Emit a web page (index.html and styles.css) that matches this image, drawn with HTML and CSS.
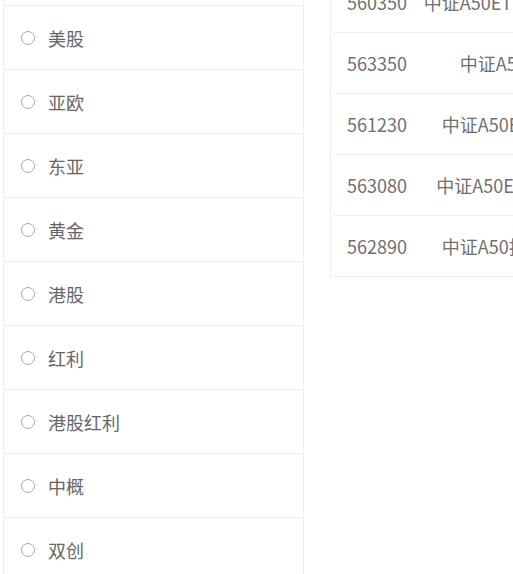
FILE: index.html
```html
<!DOCTYPE html>
<html lang="zh-CN">
<head>
  <meta charset="UTF-8" />
  <meta name="viewport" content="width=device-width, initial-scale=1.0" />
  <title>ETF 分类</title>
  <link rel="stylesheet" href="styles.css">
</head>
<body>
  <main class="layout">
    <ul class="category-list">
      <li class="category-item"><span class="radio"></span>全部</li>
      <li class="category-item"><span class="radio"></span>美股</li>
      <li class="category-item"><span class="radio"></span>亚欧</li>
      <li class="category-item"><span class="radio"></span>东亚</li>
      <li class="category-item"><span class="radio"></span>黄金</li>
      <li class="category-item"><span class="radio"></span>港股</li>
      <li class="category-item"><span class="radio"></span>红利</li>
      <li class="category-item"><span class="radio"></span>港股红利</li>
      <li class="category-item"><span class="radio"></span>中概</li>
      <li class="category-item"><span class="radio"></span>双创</li>
      <li class="category-item"><span class="radio"></span>科创</li>
    </ul>

    <section class="fund-panel">
      <table class="fund-table">
        <thead>
          <tr>
            <th class="col-code">代码</th>
            <th class="col-name">名称</th>
          </tr>
        </thead>
        <tbody>
          <tr>
            <td class="col-code">560350</td>
            <td class="col-name">中证A50ETF指数基金</td>
          </tr>
          <tr>
            <td class="col-code">563350</td>
            <td class="col-name">中证A50ETF</td>
          </tr>
          <tr>
            <td class="col-code">561230</td>
            <td class="col-name">中证A50ETF基金</td>
          </tr>
          <tr>
            <td class="col-code">563080</td>
            <td class="col-name">中证A50ETF联接A</td>
          </tr>
          <tr>
            <td class="col-code">562890</td>
            <td class="col-name">中证A50指数ETF</td>
          </tr>
        </tbody>
      </table>
    </section>
  </main>
</body>
</html>
```

FILE: styles.css
```css
html,
body {
  overflow: hidden;
}

body {
  font-family: "Noto Sans CJK SC", "Noto Sans", sans-serif;
  margin: 0;
  padding: 0;
  background: #fff;
  color: #666;
}

/* page is shown scrolled a little, so the first row sits above the fold */
.layout {
  display: flex;
  align-items: flex-start;
  gap: 26px;
  margin-top: -58px;
  padding-left: 3px;
}

.category-list {
  list-style: none;
  margin: 0;
  padding: 0;
  width: 299px;
  flex: none;
  border-left: 1px solid #eee;
  border-right: 1px solid #eee;
}

.category-item {
  box-sizing: border-box;
  display: flex;
  align-items: center;
  gap: 13px;
  height: 64px;
  padding-left: 17px;
  border-bottom: 1px solid #eee;
  font-size: 18px;
  color: #666;
}

.radio {
  box-sizing: border-box;
  flex: none;
  width: 14px;
  height: 14px;
  border: 1.5px solid #aaa;
  border-radius: 50%;
}

.fund-panel {
  flex: none;
  border-left: 1px solid #eee;
  padding-left: 2px;
}

.fund-table {
  border-collapse: collapse;
  width: 270px;
  font-size: 18px;
}

.fund-table th,
.fund-table td {
  padding: 0;
  border-bottom: 1px solid #eee;
  white-space: nowrap;
  font-weight: 400;
}

.fund-table th {
  height: 29px;
  font-size: 14px;
  color: #999;
}

.fund-table td {
  height: 60px;
  color: #707070;
}

.col-code {
  width: 66px;
  padding-left: 14px !important;
  text-align: left;
}

.col-name {
  width: 184px;
  text-align: center;
}
```
